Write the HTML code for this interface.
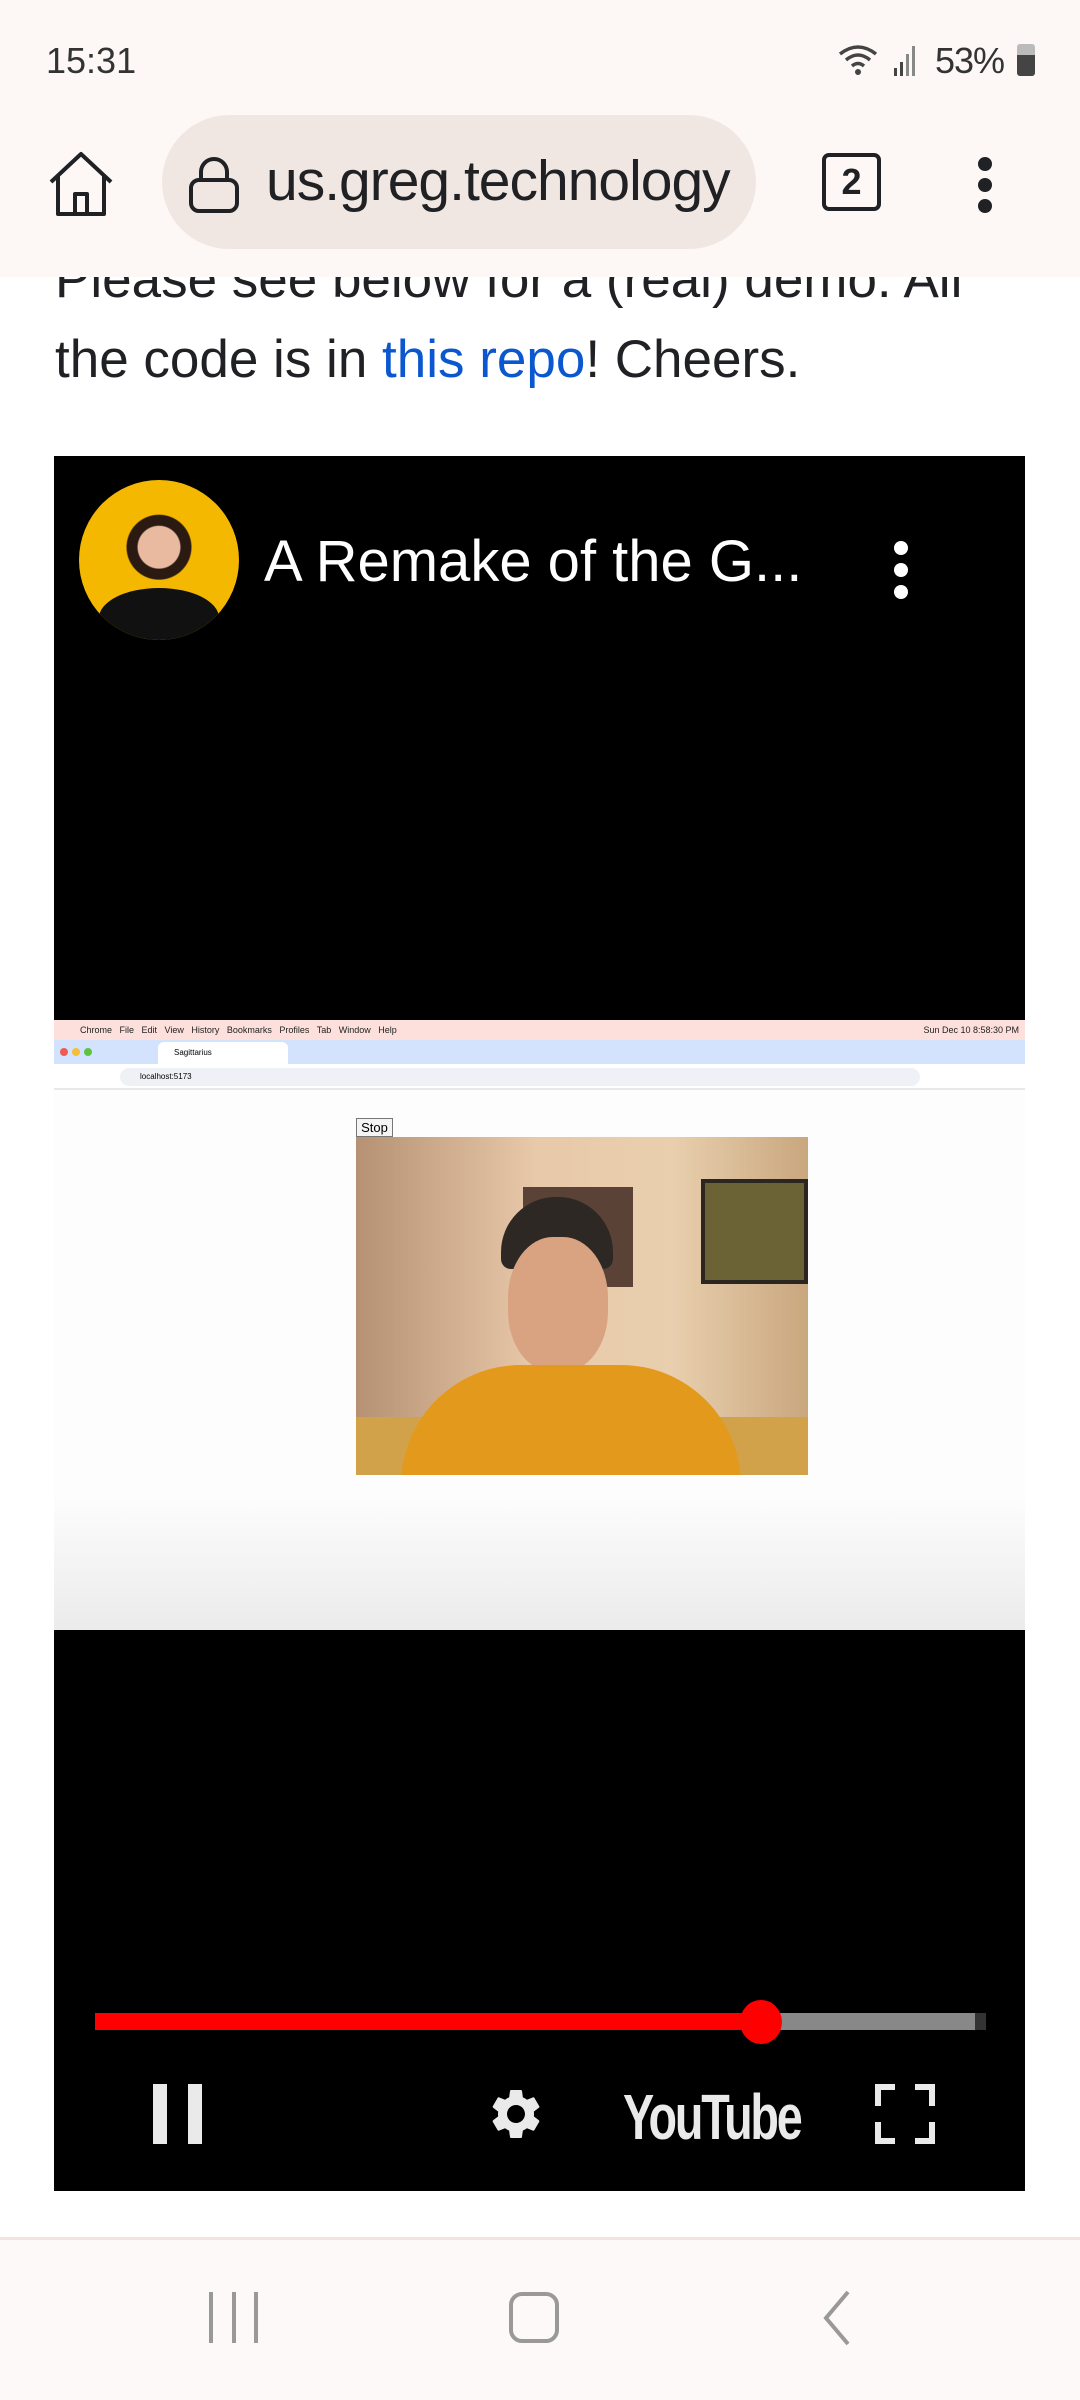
<!DOCTYPE html>
<html><head><meta charset="utf-8"><style>
*{margin:0;padding:0;box-sizing:border-box}
body{width:1080px;height:2400px;background:#fff;position:relative;overflow:hidden;font-family:"Liberation Sans",sans-serif}
.abs{position:absolute}
</style></head><body>
<!-- article text -->
<div class="abs" style="left:55px;top:240px;font-size:53px;color:#202124;line-height:80px;white-space:nowrap;letter-spacing:0px">Please see below for a (real) demo. All<br>the code is in <span style="color:#0b57d0">this repo</span>! Cheers.</div>
<!-- header -->
<div class="abs" style="left:0;top:0;width:1080px;height:277px;background:#fdf8f6"></div>
<div class="abs" style="left:46px;top:40px;font-size:36px;color:#333">15:31</div>
<div class="abs" style="left:935px;top:40px;font-size:36px;color:#333;letter-spacing:-1px">53%</div>
<svg class="abs" style="left:838px;top:42px" width="90" height="36" viewBox="0 0 90 36"><path d="M2 12 Q20 -2 38 12 M8 18 Q20 8 32 18 M14 24 Q20 19 26 24" stroke="#444" stroke-width="3.5" fill="none"/><circle cx="20" cy="30" r="3" fill="#444"/><rect x="56" y="26" width="3" height="8" fill="#444"/><rect x="62" y="20" width="3" height="14" fill="#444"/><rect x="68" y="12" width="3" height="22" fill="#888"/><rect x="74" y="4" width="3" height="30" fill="#888"/></svg>
<div class="abs" style="left:1017px;top:44px;width:18px;height:32px;border-radius:3px;background:linear-gradient(#bbb 0 35%,#444 35%)"></div>
<svg class="abs" style="left:46px;top:150px" width="70" height="70" viewBox="0 0 70 70"><path d="M5 32 L35 4 L65 32 M12 26 V64 H58 V26 M29 64 V44 H41 V64" stroke="#202124" stroke-width="4" fill="none" stroke-linejoin="round"/></svg>
<div class="abs" style="left:162px;top:115px;width:594px;height:134px;border-radius:67px;background:#f1e7e2"></div>
<svg class="abs" style="left:188px;top:156px" width="52" height="58" viewBox="0 0 52 58"><rect x="3" y="24" width="46" height="31" rx="8" stroke="#202124" stroke-width="4" fill="none"/><path d="M13 24 V16 A13 13 0 0 1 39 16 V24" stroke="#202124" stroke-width="4" fill="none"/></svg>
<div class="abs" style="left:266px;top:148px;font-size:57px;color:#202124;letter-spacing:-1px">us.greg.technology</div>
<div class="abs" style="left:822px;top:153px;width:59px;height:58px;border:4px solid #202124;border-radius:7px;font-size:36px;font-weight:bold;text-align:center;line-height:50px;color:#202124">2</div>
<div class="abs" style="left:978px;top:157px;width:14px;height:14px;border-radius:50%;background:#202124;box-shadow:0 21px 0 #202124,0 42px 0 #202124"></div>
<!-- video -->
<div class="abs" style="left:54px;top:456px;width:971px;height:1735px;background:#000"></div>
<div class="abs" style="left:79px;top:480px;width:160px;height:160px;border-radius:50%;background:radial-gradient(circle at 50% 42%,#e9b9a0 0 17%,#2a1a12 18% 26%,#f5b800 27%);overflow:hidden"><div style="position:absolute;left:20px;top:108px;width:120px;height:60px;border-radius:50% 50% 0 0;background:#111"></div></div>
<div class="abs" style="left:264px;top:528px;font-size:58px;color:#fff;white-space:nowrap">A Remake of the G...</div>
<div class="abs" style="left:894px;top:541px;width:14px;height:14px;border-radius:50%;background:#fff;box-shadow:0 22px 0 #fff,0 44px 0 #fff"></div>
<!-- embedded screenshot -->
<div class="abs" style="left:54px;top:1020px;width:971px;height:610px;background:linear-gradient(#fdfdfd 0 78%,#ebebeb 100%)"></div>
<div class="abs" style="left:54px;top:1020px;width:971px;height:20px;background:#fde0dc;font-size:9px;line-height:20px;color:#222;padding-left:26px;white-space:nowrap">Chrome &nbsp; File &nbsp; Edit &nbsp; View &nbsp; History &nbsp; Bookmarks &nbsp; Profiles &nbsp; Tab &nbsp; Window &nbsp; Help<span style="position:absolute;right:6px">Sun Dec 10 8:58:30 PM</span></div>
<div class="abs" style="left:54px;top:1040px;width:971px;height:24px;background:#d3e3fd"></div>
<div class="abs" style="left:60px;top:1048px;width:8px;height:8px;border-radius:50%;background:#ee5b55;box-shadow:12px 0 0 #f4be3b,24px 0 0 #5dc442"></div>
<div class="abs" style="left:158px;top:1042px;width:130px;height:22px;background:#fff;border-radius:6px 6px 0 0;font-size:8px;padding:6px 0 0 16px">Sagittarius</div>
<div class="abs" style="left:54px;top:1064px;width:971px;height:26px;background:#fff;border-bottom:2px solid #e8e8e8"></div>
<div class="abs" style="left:120px;top:1068px;width:800px;height:18px;border-radius:9px;background:#eef1f6;font-size:8px;line-height:18px;padding-left:20px">localhost:5173</div>
<div class="abs" style="left:356px;top:1118px;width:37px;height:19px;border:1px solid #777;background:#f4f4f4;font-size:13px;text-align:center;line-height:17px">Stop</div>
<div class="abs" style="left:356px;top:1137px;width:452px;height:338px;background:linear-gradient(90deg,#b69174 0%,#e8c9a9 40%,#e9cfae 70%,#c9a77e 100%);overflow:hidden">
 <div style="position:absolute;left:167px;top:50px;width:110px;height:100px;background:#5a4336"></div>
 <div style="position:absolute;left:345px;top:42px;width:107px;height:105px;background:#6b6336;border:4px solid #2b2620"></div>
 <div style="position:absolute;left:145px;top:60px;width:112px;height:72px;border-radius:55px 55px 10px 10px;background:#2e2825"></div>
 <div style="position:absolute;left:152px;top:100px;width:100px;height:135px;border-radius:45%;background:#d9a382"></div>
 <div style="position:absolute;left:0;top:280px;width:452px;height:60px;background:#d1a24a"></div>
 <div style="position:absolute;left:45px;top:228px;width:340px;height:140px;border-radius:120px 120px 0 0;background:#e39a1c"></div>
</div>
<!-- controls -->
<div class="abs" style="left:95px;top:2013px;width:891px;height:17px;background:#333"></div>
<div class="abs" style="left:95px;top:2013px;width:880px;height:17px;background:#888"></div>
<div class="abs" style="left:95px;top:2013px;width:666px;height:17px;background:#f00"></div>
<div class="abs" style="left:740px;top:2000px;width:42px;height:44px;border-radius:50%;background:#f00"></div>
<div class="abs" style="left:153px;top:2084px;width:14px;height:60px;background:#eaeaea"></div>
<div class="abs" style="left:188px;top:2084px;width:14px;height:60px;background:#eaeaea"></div>
<svg class="abs" style="left:486px;top:2084px" width="60" height="60" viewBox="0 0 24 24"><path fill="#eaeaea" d="M19.14 12.94c.04-.3.06-.61.06-.94 0-.32-.02-.64-.07-.94l2.03-1.58a.49.49 0 0 0 .12-.61l-1.920-3.32a.488.488 0 0 0-.59-.22l-2.39.96c-.5-.38-1.030-.7-1.62-.94l-.36-2.54a.484.484 0 0 0-.48-.41h-3.84c-.24 0-.43.17-.47.41l-.36 2.54c-.59.24-1.13.57-1.62.94l-2.39-.96c-.22-.08-.47 0-.59.22L2.74 8.87c-.12.21-.08.47.12.61l2.03 1.58c-.05.3-.09.63-.09.94s.02.64.07.94l-2.03 1.58a.49.49 0 0 0-.12.61l1.92 3.32c.12.22.37.29.59.22l2.39-.96c.5.38 1.03.7 1.62.94l.36 2.54c.05.24.24.41.48.41h3.84c.24 0 .44-.17.47-.41l.36-2.54c.59-.24 1.13-.56 1.62-.94l2.39.96c.22.08.47 0 .59-.22l1.92-3.32c.12-.22.07-.47-.12-.61l-2.010-1.58zM12 15.6c-1.98 0-3.6-1.620-3.6-3.6s1.62-3.6 3.6-3.6 3.6 1.62 3.6 3.6-1.62 3.6-3.6 3.6z"/></svg>
<div class="abs" style="left:623px;top:2080px;font-size:64px;color:#eaeaea;letter-spacing:-3px;transform:scaleX(0.73);transform-origin:left top;white-space:nowrap;font-weight:bold">YouTube</div>
<svg class="abs" style="left:875px;top:2084px" width="60" height="60" viewBox="0 0 60 60"><path d="M3 22 V3 H20 M40 3 H57 V22 M57 38 V57 H40 M20 57 H3 V38" stroke="#eaeaea" stroke-width="6" fill="none"/></svg>
<!-- nav bar -->
<div class="abs" style="left:0;top:2237px;width:1080px;height:163px;background:#fdf9f8;border-top:3px solid #f3e3df"></div>
<div class="abs" style="left:209px;top:2292px;width:4px;height:51px;background:#999;box-shadow:23px 0 0 #999,45px 0 0 #999"></div>
<div class="abs" style="left:509px;top:2292px;width:50px;height:51px;border:4px solid #999;border-radius:13px"></div>
<svg class="abs" style="left:818px;top:2290px" width="40" height="56" viewBox="0 0 40 56"><path d="M30 2 L8 28 L30 54" stroke="#999" stroke-width="4" fill="none"/></svg>
</body></html>
